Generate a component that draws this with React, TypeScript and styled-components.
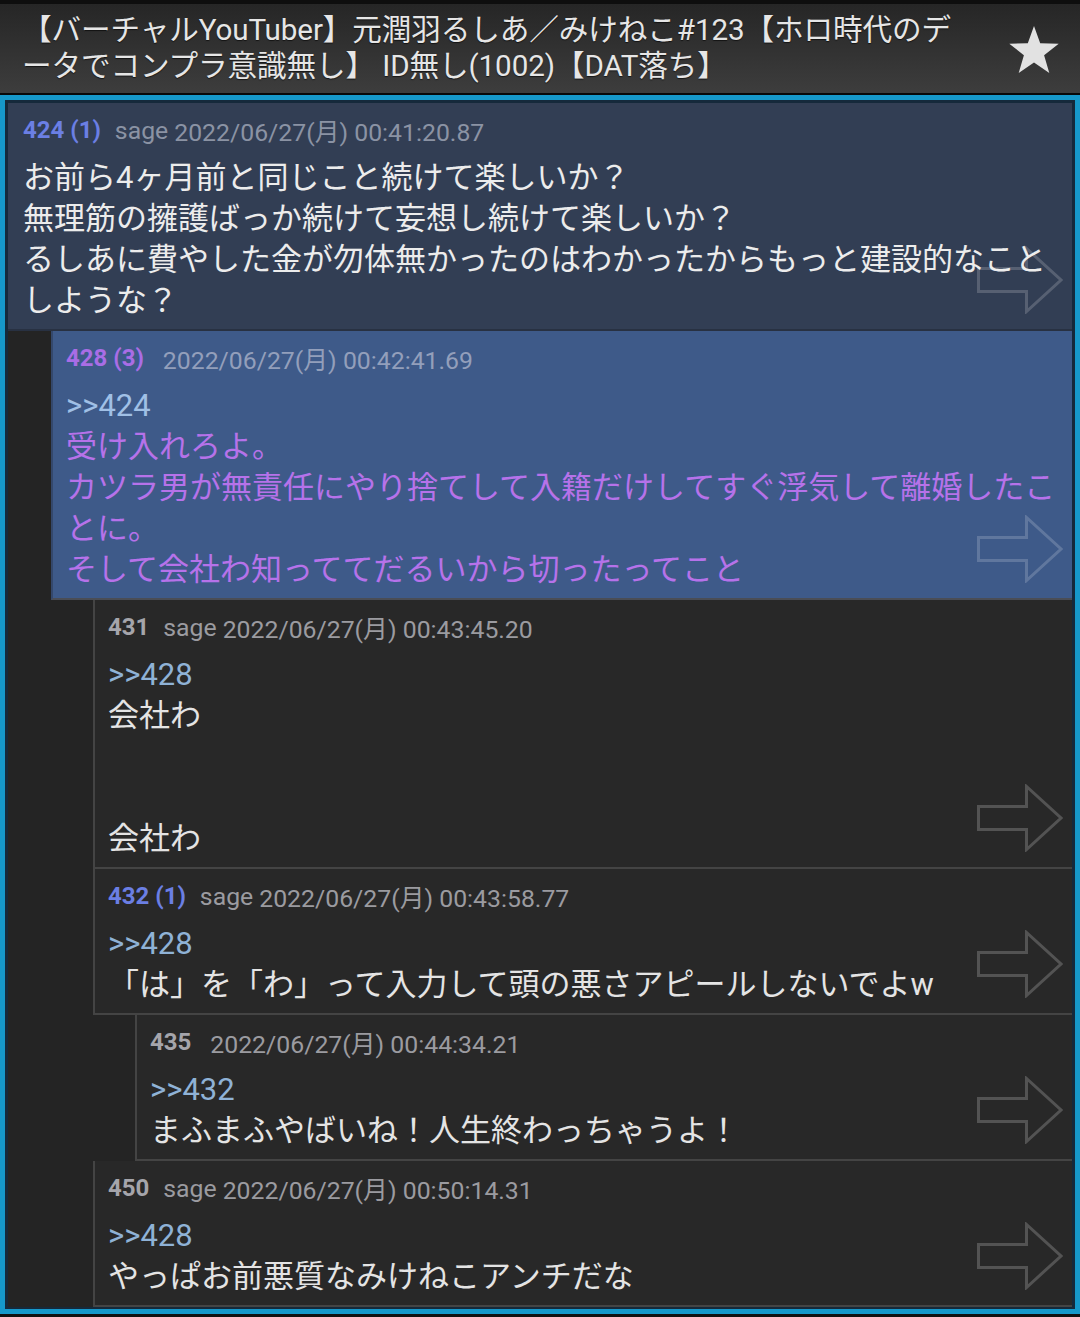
import styled, { createGlobalStyle } from "styled-components";

const GlobalStyle = createGlobalStyle`
    html, body {
        margin: 0;
        padding: 0;
        background: #111;
    }
    body {
        font-family: Roboto, "Noto Sans CJK JP", sans-serif;
    }
`;

type Tone = "navy" | "blue" | "dark";

interface PostData {
    no: number;
    count?: number;
    name: string;
    date: string;
    level: number;
    tone: Tone;
    anchor?: string;
    lines: string[];
}

const TONES = {
    navy: {
        bg: "#323e54",
        side: "#2a3448",
        bottom: "#283142",
        meta: "#8b93a4",
        text: "#ececec",
        anchor: "#9cbbe0",
        arrow: "rgba(255,255,255,0.18)",
    },
    blue: {
        bg: "#3e5a89",
        side: "#34486c",
        bottom: "#4a4d55",
        meta: "#939fbb",
        text: "#b672ea",
        anchor: "#a0c0e6",
        arrow: "rgba(255,255,255,0.18)",
    },
    dark: {
        bg: "#282828",
        side: "#444444",
        bottom: "#444444",
        meta: "#9b9ba0",
        text: "#e4e4e4",
        anchor: "#8fb2d6",
        arrow: "rgba(255,255,255,0.2)",
    },
};

const numberColor = (count?: number) => {
    if (!count) return "#a5a5ab";
    if (count >= 3) return "#a96de6";
    return "#6b7fe4";
};

const DATE = "2022/06/27(月)";

const posts: PostData[] = [
    {
        no: 424,
        count: 1,
        name: "sage",
        date: `${DATE} 00:41:20.87`,
        level: 0,
        tone: "navy",
        lines: [
            "お前ら4ヶ月前と同じこと続けて楽しいか？",
            "無理筋の擁護ばっか続けて妄想し続けて楽しいか？",
            "るしあに費やした金が勿体無かったのはわかったからもっと建設的なこと",
            "しような？",
        ],
    },
    {
        no: 428,
        count: 3,
        name: "",
        date: `${DATE} 00:42:41.69`,
        level: 1,
        tone: "blue",
        anchor: ">>424",
        lines: [
            "受け入れろよ。",
            "カツラ男が無責任にやり捨てして入籍だけしてすぐ浮気して離婚したこ",
            "とに。",
            "そして会社わ知っててだるいから切ったってこと",
        ],
    },
    {
        no: 431,
        name: "sage",
        date: `${DATE} 00:43:45.20`,
        level: 2,
        tone: "dark",
        anchor: ">>428",
        lines: ["会社わ", "", "", "会社わ"],
    },
    {
        no: 432,
        count: 1,
        name: "sage",
        date: `${DATE} 00:43:58.77`,
        level: 2,
        tone: "dark",
        anchor: ">>428",
        lines: ["「は」を「わ」って入力して頭の悪さアピールしないでよw"],
    },
    {
        no: 435,
        name: "",
        date: `${DATE} 00:44:34.21`,
        level: 3,
        tone: "dark",
        anchor: ">>432",
        lines: ["まふまふやばいね！人生終わっちゃうよ！"],
    },
    {
        no: 450,
        name: "sage",
        date: `${DATE} 00:50:14.31`,
        level: 2,
        tone: "dark",
        anchor: ">>428",
        lines: ["やっぱお前悪質なみけねこアンチだな"],
    },
];

const Page = styled.div`
    width: 1080px;
    min-height: 1317px;
    background: #111;
    overflow: hidden;
`;

const Header = styled.header`
    display: flex;
    align-items: center;
    justify-content: space-between;
    height: 81px;
    padding: 8px 18px 0 22px;
    border-top: 4px solid #0e0e0e;
    border-bottom: 2px solid #080808;
    background: linear-gradient(#262626, #3d3d3d);
`;

const Title = styled.h1`
    margin: 0;
    font-size: 29.6px;
    font-weight: 400;
    line-height: 36px;
    color: #e6e6e6;
    letter-spacing: -0.1px;
    white-space: nowrap;
    text-shadow: 0 1px 1px rgba(0, 0, 0, 0.6);
    align-self: flex-start;
`;

const StarButton = styled.button`
    display: flex;
    align-items: center;
    justify-content: center;
    width: 56px;
    height: 56px;
    margin-top: -6px;
    padding: 0;
    border: none;
    background: none;
`;

const Frame = styled.div`
    border: 5px solid #1698ca;
`;

const List = styled.div`
    border: 3px solid #15293b;
    border-bottom-width: 2px;
    background: #242424;
`;

const Post = styled.article<{ $level: number; $tone: Tone }>`
    position: relative;
    margin-left: ${(p) => (p.$level > 0 ? p.$level * 42 + 1 : 0)}px;
    padding: 8px 15px 8px ${(p) => (p.$level > 0 ? 13 : 15)}px;
    background: ${(p) => TONES[p.$tone].bg};
    border-left: ${(p) =>
        p.$level > 0 ? `2px solid ${TONES[p.$tone].side}` : "none"};
    border-bottom: 2px solid ${(p) => TONES[p.$tone].bottom};
`;

const Meta = styled.div<{ $tone: Tone }>`
    display: flex;
    align-items: center;
    height: 38px;
    margin-bottom: 8px;
    font-size: 24.8px;
    color: ${(p) => TONES[p.$tone].meta};
    white-space: pre;
`;

const PostNumber = styled.span<{ $color: string }>`
    font-size: 24px;
    font-weight: 700;
    color: ${(p) => p.$color};
    margin-right: 14px;
`;

const Name = styled.span`
    margin-right: 6px;
`;

const NoName = styled.span`
    width: 5px;
`;

const Body = styled.div<{ $tone: Tone }>`
    font-size: 31px;
    line-height: 41px;
    color: ${(p) => TONES[p.$tone].text};
    white-space: pre;
`;

const Line = styled.div`
    height: 41px;
`;

const Anchor = styled.div<{ $tone: Tone }>`
    height: 41px;
    color: ${(p) => TONES[p.$tone].anchor};
`;

const ArrowMark = styled.svg`
    position: absolute;
    right: 9px;
    bottom: 15px;
    width: 86px;
    height: 68px;
    pointer-events: none;
`;

const Star = () => (
    <svg width="52" height="50" viewBox="0 0 52 50">
        <polygon
            points="26,1 32.2,18.3 50.7,18.8 36.1,30.2 41.3,48 26,37.6 10.7,48 15.9,30.2 1.3,18.8 19.8,18.3"
            fill="#e2e2e2"
        />
    </svg>
);

const Arrow = ({ tone }: { tone: Tone }) => (
    <ArrowMark viewBox="0 0 86 68">
        <path
            d="M1.5 22.5 H49.5 V2.5 L84 34 L49.5 65.5 V45.5 H1.5 Z"
            fill="none"
            stroke={TONES[tone].arrow}
            strokeWidth="3"
            strokeLinejoin="miter"
        />
    </ArrowMark>
);

const PostItem = ({ post }: { post: PostData }) => {
    const number = post.count ? `${post.no} (${post.count})` : `${post.no}`;
    return (
        <Post $level={post.level} $tone={post.tone}>
            <Meta $tone={post.tone}>
                <PostNumber $color={numberColor(post.count)}>{number}</PostNumber>
                {post.name ? <Name>{post.name}</Name> : <NoName />}
                <span>{post.date}</span>
            </Meta>
            <Body $tone={post.tone}>
                {post.anchor && <Anchor $tone={post.tone}>{post.anchor}</Anchor>}
                {post.lines.map((line, i) => (
                    <Line key={i}>{line}</Line>
                ))}
            </Body>
            <Arrow tone={post.tone} />
        </Post>
    );
};

const App = () => {
    return (
        <Page>
            <GlobalStyle />
            <Header>
                <Title>
                    【バーチャルYouTuber】元潤羽るしあ／みけねこ#123【ホロ時代のデ
                    <br />
                    ータでコンプラ意識無し】 ID無し(1002)【DAT落ち】
                </Title>
                <StarButton aria-label="お気に入り">
                    <Star />
                </StarButton>
            </Header>
            <Frame>
                <List>
                    {posts.map((post) => (
                        <PostItem key={post.no} post={post} />
                    ))}
                </List>
            </Frame>
        </Page>
    );
};

export default App;
